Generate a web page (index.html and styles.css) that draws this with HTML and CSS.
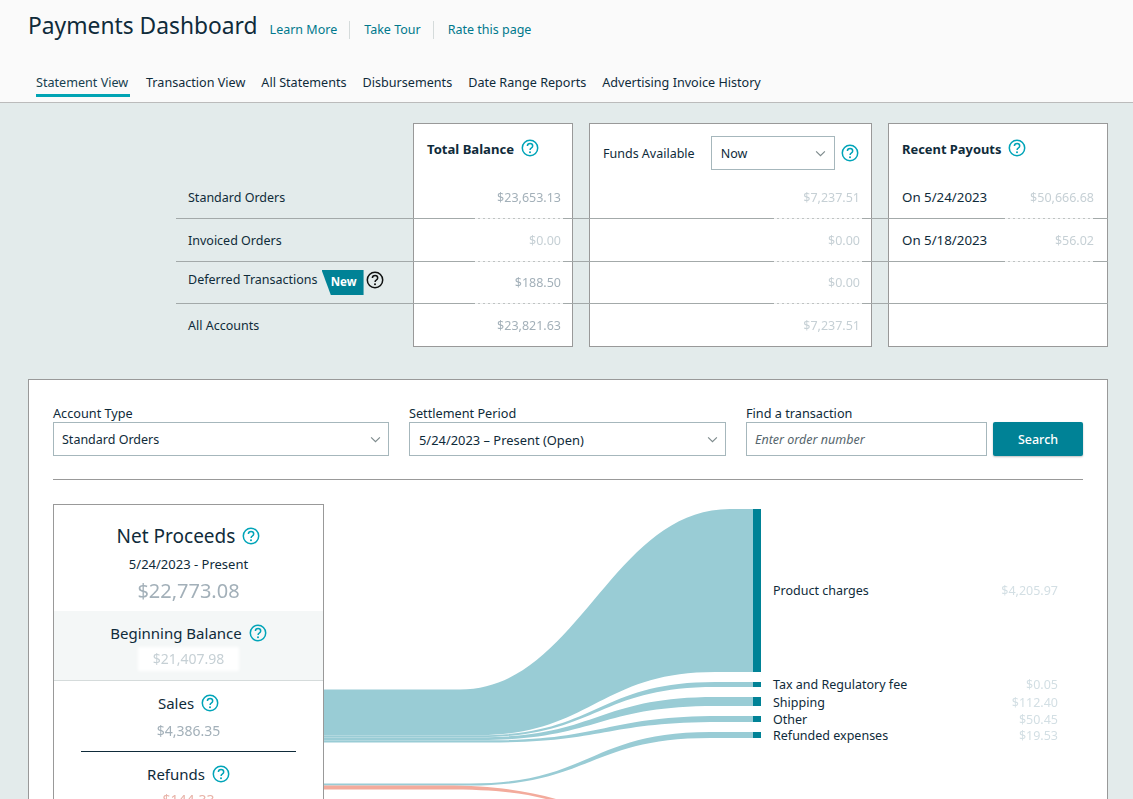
FILE: index.html
```html
<!DOCTYPE html>
<html lang="en">
<head>
<meta charset="utf-8">
<title>Payments Dashboard</title>
<link rel="stylesheet" href="styles.css">
</head>
<body>
<svg class="defs" width="0" height="0" aria-hidden="true">
  <symbol id="help" viewBox="0 0 18 18">
    <circle cx="9" cy="9" r="7.7" fill="none" stroke="currentColor" stroke-width="1.5"/>
    <path d="M6.4 7.1c0-1.6 1.2-2.5 2.7-2.5s2.6.9 2.6 2.3c0 1.1-.6 1.7-1.5 2.3-.8.5-1.1.9-1.1 1.8" fill="none" stroke="currentColor" stroke-width="1.5"/>
    <circle cx="9" cy="13.3" r="1" fill="currentColor"/>
  </symbol>
  <symbol id="chev" viewBox="0 0 12 8">
    <path d="M1 1.5l5 5 5-5" fill="none" stroke="currentColor" stroke-width="1.3"/>
  </symbol>
</svg>
<header class="top">
  <div class="title-row">
    <h1>Payments Dashboard</h1>
    <nav class="help-links">
      <a>Learn More</a><a>Take Tour</a><a>Rate this page</a>
    </nav>
  </div>
  <nav class="tabs">
    <a class="tab active">Statement View</a>
    <a class="tab">Transaction View</a>
    <a class="tab">All Statements</a>
    <a class="tab">Disbursements</a>
    <a class="tab">Date Range Reports</a>
    <a class="tab">Advertising Invoice History</a>
  </nav>
</header>

<section class="summary">
  <div class="card c-total"></div>
  <div class="card c-funds"></div>
  <div class="card c-pay"></div>

  <div class="head h-total"><b>Total Balance</b><svg class="ic"><use href="#help"/></svg></div>
  <div class="head h-funds">
    <span>Funds Available</span>
    <div class="select now"><span>Now</span><svg class="chev"><use href="#chev"/></svg></div>
    <svg class="ic"><use href="#help"/></svg>
  </div>
  <div class="head h-pay"><b>Recent Payouts</b><svg class="ic"><use href="#help"/></svg></div>

  <div class="line r1"></div><div class="line r2"></div><div class="line r3"></div>

  <div class="wash k-total r1"></div><div class="wash k-total r2"></div><div class="wash k-total r3"></div>
  <div class="wash k-funds r1"></div><div class="wash k-funds r2"></div><div class="wash k-funds r3"></div>
  <div class="wash wash-pay k-pay r1"></div><div class="wash wash-pay k-pay r2"></div>

  <div class="cell lbl r1">Standard Orders</div>
  <div class="cell amt k-total r1"><span class="redact">$23,653.13</span></div>
  <div class="cell amt k-funds r1"><span class="redact faint">$7,237.51</span></div>
  <div class="cell pay k-pay r1"><span class="date">On 5/24/2023</span><span class="redact faint">$50,666.68</span></div>

  <div class="cell lbl r2">Invoiced Orders</div>
  <div class="cell amt k-total r2"><span class="redact faint">$0.00</span></div>
  <div class="cell amt k-funds r2"><span class="redact faint">$0.00</span></div>
  <div class="cell pay k-pay r2"><span class="date">On 5/18/2023</span><span class="redact faint">$56.02</span></div>

  <div class="cell lbl r3 deferred"><span>Deferred Transactions</span><span class="new">New</span><svg class="ic dark"><use href="#help"/></svg></div>
  <div class="cell amt k-total r3"><span class="redact">$188.50</span></div>
  <div class="cell amt k-funds r3"><span class="redact faint">$0.00</span></div>

  <div class="cell lbl r4">All Accounts</div>
  <div class="cell amt k-total r4"><span class="redact">$23,821.63</span></div>
  <div class="cell amt k-funds r4"><span class="redact faint">$7,237.51</span></div>
</section>

<section class="panel">
  <div class="filters">
    <div class="field f-account">
      <label>Account Type</label>
      <div class="select"><span>Standard Orders</span><svg class="chev"><use href="#chev"/></svg></div>
    </div>
    <div class="field f-period">
      <label>Settlement Period</label>
      <div class="select"><span class="period">5/24/2023 – Present (Open)</span><svg class="chev"><use href="#chev"/></svg></div>
    </div>
    <div class="field f-find">
      <label>Find a transaction</label>
      <div class="input">Enter order number</div>
    </div>
    <button class="search">Search</button>
  </div>
  <hr class="rule">
  <div class="flow">
    <aside class="net">
      <div class="net-top">
        <div class="net-title"><span>Net Proceeds</span><svg class="ic"><use href="#help"/></svg></div>
        <div class="net-date">5/24/2023 - Present</div>
        <div class="net-amt"><span class="redact">$22,773.08</span></div>
      </div>
      <div class="net-begin">
        <div class="net-sub"><span>Beginning Balance</span><svg class="ic"><use href="#help"/></svg></div>
        <div class="sub-amt"><span class="redact faint patch">$21,407.98</span></div>
      </div>
      <div class="net-sales">
        <div class="net-sub"><span>Sales</span><svg class="ic"><use href="#help"/></svg></div>
        <div class="sub-amt amt-sales"><span class="redact">$4,386.35</span></div>
      </div>
      <div class="net-refunds">
        <div class="net-sub"><span>Refunds</span><svg class="ic"><use href="#help"/></svg></div>
        <div class="sub-amt"><span class="redact red">$144.33</span></div>
      </div>
    </aside>
    <svg class="sankey" viewBox="324 504 759 295">
      <path class="link" d="M324 689.5H460C578 689.5 611 509 730 509H753V672H715C600 672 590 735 480 735H324Z"/>
      <path class="link" d="M324 735.2H480C597 735.2 597 682 715 682H753V687H715C597 687 597 737 480 737H324Z"/>
      <path class="link" d="M324 737.2H480C597 737.2 597 697 715 697H753V706H715C597 706 597 740 480 740H324Z"/>
      <path class="link" d="M324 740.2H490C605 740.2 605 716 720 716H753V722H720C605 722 605 742.5 490 742.5H324Z"/>
      <path class="link" d="M324 783.5H470C590 783.5 590 732 710 732H753V738H710C590 738 590 785.5 470 785.5H324Z"/>
      <path class="link-red" d="M324 785.5H445C490 785.5 525 790 556 799H546C520 792 490 789.5 445 789.5H324Z"/>
      <rect class="node" x="753" y="509" width="8" height="163"/>
      <rect class="node" x="753" y="682" width="8" height="5"/>
      <rect class="node" x="753" y="697" width="8" height="9"/>
      <rect class="node" x="753" y="716" width="8" height="6"/>
      <rect class="node" x="753" y="732" width="8" height="6"/>
      <text class="nl" x="773" y="595">Product charges</text>
      <text class="nl" x="773" y="689">Tax and Regulatory fee</text>
      <text class="nl" x="773" y="707">Shipping</text>
      <text class="nl" x="773" y="724">Other</text>
      <text class="nl" x="773" y="740">Refunded expenses</text>
      <text class="nv" x="1058" y="595">$4,205.97</text>
      <text class="nv" x="1058" y="689">$0.05</text>
      <text class="nv" x="1058" y="707">$112.40</text>
      <text class="nv" x="1058" y="724">$50.45</text>
      <text class="nv" x="1058" y="740">$19.53</text>
    </svg>
  </div>
</section>
</body>
</html>
```

FILE: styles.css
```css
* { box-sizing: border-box; }
html, body { margin: 0; height: 799px; overflow: hidden; }
body {
  background: #e3ebeb;
  color: #0f2b3a;
  font-family: "Noto Sans", "Open Sans", sans-serif;
  font-size: 12.5px;
  line-height: 18px;
}
.defs { display: block; height: 0; }

.top {
  height: 103px;
  background: #fafafa;
  border-bottom: 1px solid #bbb;
  padding: 0 0 0 28px;
}
.title-row { display: flex; align-items: baseline; padding-top: 10px; height: 66px; }
h1 { margin: 0; font-size: 22.8px; line-height: 32px; font-weight: 400; color: #0f2b3a; }
.help-links { display: flex; margin-left: 12px; font-size: 12.5px; color: #00788c; }
.help-links a { padding: 0 12px 0 14px; border-left: 1px solid #d5dbdb; }
.help-links a:first-child { padding-left: 0; border-left: 0; }
.tabs { display: flex; gap: 16px; padding-left: 8px; font-size: 12.6px; }
.tab { color: #0f2b3a; height: 31px; padding-top: 8px; }
.tab.active { color: #16404f; border-bottom: 3px solid #00a4b4; min-width: 94px; }

.summary {
  margin: 20px 25px 0 176px;
  display: grid;
  grid-template-columns: 237px 160px 16px 283px 16px 220px;
  grid-template-rows: 96px 43px 42px 43px;
}
.card { background: #fff; border: 1px solid #999; grid-row: 1 / 5; }
.c-total, .h-total, .k-total { grid-column: 2; }
.c-funds, .h-funds, .k-funds { grid-column: 4; }
.c-pay, .h-pay, .k-pay { grid-column: 6; }
.head { grid-row: 1; align-self: start; display: flex; align-items: center; z-index: 1; }
.head b { font-weight: 700; font-size: 13.1px; }
.h-pay b { font-size: 12.9px; }
.h-total, .h-pay { padding: 17px 0 0 14px; gap: 7px; }
.h-total .ic, .h-pay .ic { margin-top: -2px; }
.h-funds { padding: 14px 0 0 14px; }
.ic { width: 18px; height: 18px; color: #00a4b8; flex: none; }
.ic.dark { color: #0f1111; }
.h-funds .select { margin: -1px 6px 0 16px; }
.h-funds .ic { margin-top: -2px; }

.select {
  height: 34px;
  border: 1px solid #a6b7bc;
  background: #fff;
  display: flex;
  align-items: center;
  justify-content: space-between;
  padding: 1px 7px 0 8px;
}
.select.now { width: 124px; padding: 1px 8px 0 9px; }
.chev { width: 11px; height: 7px; color: #7d8a8c; flex: none; }
.period { font-size: 12.9px; margin-left: 1px; }

.line { grid-column: 1 / -1; border-bottom: 1px solid #a3a9a9; z-index: 2; }
.wash {
  align-self: end;
  justify-self: end;
  width: 88px;
  height: 1px;
  margin-right: 10px;
  z-index: 3;
  background: repeating-linear-gradient(90deg, rgba(255,255,255,.85) 0 3px, rgba(255,255,255,.3) 3px 5px);
}
.wash-pay { margin-right: 15px; }
.r1 { grid-row: 1; }
.r2 { grid-row: 2; }
.r3 { grid-row: 3; }
.r4 { grid-row: 4; }
.cell { z-index: 3; align-self: center; }
.cell.r1 { align-self: end; padding-bottom: 12px; }
.lbl { grid-column: 1; padding-left: 12px; }
.amt { text-align: right; padding-right: 12px; }
.pay { display: flex; justify-content: space-between; padding: 0 14px 0 14px; }
.date { font-size: 13.3px; margin-top: -1px; }
.deferred { display: flex; align-items: flex-start; align-self: start; padding-top: 9px; }
.new {
  margin: -1px 0 0 4px;
  width: 42px;
  height: 25px;
  background: #008296;
  color: #fff;
  font-size: 11.5px;
  font-weight: 700;
  text-align: right;
  padding: 3px 7px 0 0;
  clip-path: polygon(0 0, 100% 0, 100% 100%, 22% 100%);
}
.deferred .ic { margin: 0 0 0 2px; }
.redact { color: #a3b0b9; filter: blur(.55px); display: inline-block; background: #fff; box-shadow: 0 0 3px 3px #fff; }
.redact.faint { color: #c6d0d5; }
.redact.red { color: #e8b3a8; }
.redact.patch { padding: 0 12px; }

.panel {
  margin: 32px 25px 0 28px;
  height: 500px;
  background: #fff;
  border: 1px solid #999;
  border-bottom: 0;
  padding: 26px 24px 0;
}
.filters { display: flex; align-items: flex-end; }
.field { display: flex; flex-direction: column; }
.field label { line-height: 14px; margin-bottom: 2px; font-size: 12.7px; }
.f-account { width: 336px; margin-right: 20px; }
.f-period { width: 317px; margin-right: 20px; }
.f-find { width: 241px; margin-right: 6px; }
.input {
  height: 34px;
  border: 1px solid #a6b7bc;
  padding: 8px 9px 0 8px;
  font-style: italic;
  color: #56666d;
}
.search {
  width: 90px;
  height: 34px;
  border: 0;
  border-radius: 2px;
  background: #008296;
  color: #fff;
  font: 500 12.5px "Noto Sans", sans-serif;
  box-shadow: 0 1px 2px rgba(0,0,0,.25);
}
.rule { margin: 23px 0 24px; border: 0; border-top: 1px solid #999; }

.flow { display: flex; align-items: flex-start; }
.net {
  width: 271px;
  height: 330px;
  flex: none;
  border: 1px solid #999;
  border-bottom: 0;
  text-align: center;
}
.net-top { height: 106px; padding-top: 17px; }
.net-title { display: flex; justify-content: center; align-items: center; gap: 7px; font-size: 19px; line-height: 28px; }
.net-date { margin-top: 5px; font-size: 13px; }
.net-amt { margin-top: 7px; font-size: 20px; line-height: 22px; }
.net-begin { height: 70px; padding-top: 13px; background: #f4f7f7; border-bottom: 1px solid #d5dbdb; }
.net-sub { display: flex; justify-content: center; align-items: center; gap: 7px; font-size: 15px; line-height: 18px; }
.sub-amt { margin-top: 8px; font-size: 14px; line-height: 18px; }
.amt-sales { margin-top: 10px; }
.net-sales { height: 71px; margin: 0 27px; padding-top: 13px; border-bottom: 1px solid #0f2b3a; }
.net-refunds { padding-top: 13px; }

.sankey { width: 759px; height: 295px; flex: none; display: block; }
.link { fill: #99ccd5; }
.link-red { fill: #f3ab9c; }
.node { fill: #008296; }
.nl { font-size: 12.5px; fill: #0f2b3a; }
.nv { font-size: 12.5px; fill: #d3dfe4; text-anchor: end; filter: blur(.55px); }
```
